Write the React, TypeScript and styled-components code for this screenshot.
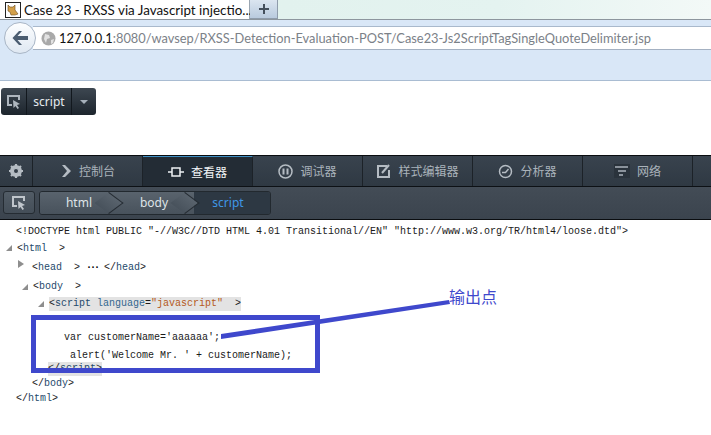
import styled, { createGlobalStyle } from "styled-components";

const GlobalStyle = createGlobalStyle`
  html, body { margin: 0; padding: 0; background: #fff; }
  body { font-family: "Noto Sans", "Noto Sans CJK SC", sans-serif; }
  * { box-sizing: border-box; }
  svg { flex: none; }
`;

const Page = styled.div`
  position: relative;
  width: 711px;
  height: 435px;
  overflow: hidden;
  background: #fff;
`;

/* browser chrome */
const TabStrip = styled.div`
  display: flex;
  height: 19px;
  background: linear-gradient(90deg, #f1f7ee 0%, #e2f2ee 40%, #e4f3f0 70%, #f3f9f7 100%);
`;

const Tab = styled.div`
  display: flex;
  align-items: center;
  gap: 3px;
  width: 250px;
  padding-left: 5px;
  background: #fff;
  border-right: 1px solid #9aa6b2;
  font-family: Lato, sans-serif;
  font-size: 13.4px;
  color: #111;
  white-space: nowrap;
`;

const NewTab = styled.div`
  display: flex;
  align-items: center;
  justify-content: center;
  width: 28px;
  background: linear-gradient(#dbe5f0, #b9cade);
  border-right: 1px solid #8f9cab;
  border-bottom: 1px solid #8f9cab;
`;

const Toolbar = styled.div`
  height: 62px;
  padding-top: 6px;
  background: #d9e7f7;
  border-top: 1px solid #8d969e;
  border-bottom: 1px solid #a9bcd2;
`;

const AddressRow = styled.div`
  display: flex;
  align-items: center;
  height: 24px;
`;

const BackButton = styled.div`
  display: flex;
  align-items: center;
  justify-content: center;
  flex: none;
  width: 32px;
  height: 32px;
  margin: 0 -3px 0 4px;
  border-radius: 50%;
  border: 1px solid #a9b6c6;
  background: linear-gradient(#fdfeff, #dfe8f2);
  position: relative;
  z-index: 1;
`;

const AddressBar = styled.div`
  display: flex;
  align-items: center;
  gap: 3px;
  flex: 1;
  height: 24px;
  padding-left: 8px;
  background: #fff;
  border-top: 1px solid #a9b9cc;
  border-bottom: 1px solid #a4b1c2;
  font-family: Lato, sans-serif;
  font-size: 12.83px;
  color: #7b8188;
  white-space: nowrap;
`;

const Host = styled.span`
  color: #111;
`;

const PageBody = styled.div`
  height: 74px;
  padding: 7px 1px;
`;

const PickerGroup = styled.div`
  display: flex;
  width: 95px;
  height: 27px;
  border-radius: 3px;
  overflow: hidden;
  background: linear-gradient(#3d4751, #1d252d);
  color: #e6ebef;
  font-size: 12px;
`;

const PickerCell = styled.div<{ $w: number }>`
  display: flex;
  align-items: center;
  justify-content: center;
  width: ${(p) => p.$w}px;
  border-right: 1px solid #12181e;
  &:last-child { border-right: 0; }
`;

const Caret = styled.div`
  width: 0;
  height: 0;
  border-left: 4px solid transparent;
  border-right: 4px solid transparent;
  border-top: 4px solid #a6b0ba;
`;

/* devtools */
const DevTabs = styled.div`
  display: flex;
  height: 32px;
  background: linear-gradient(#39434e, #2f3943);
  border-top: 1px solid #0a0d10;
  border-bottom: 1px solid #0d1115;
`;

const GearCell = styled.div`
  display: flex;
  align-items: center;
  justify-content: center;
  flex: none;
  width: 33px;
  border-right: 1px solid #1c2228;
`;

const DevTab = styled.div<{ $active?: boolean }>`
  display: flex;
  align-items: center;
  justify-content: center;
  gap: 7px;
  flex: none;
  width: 110px;
  font-size: 12px;
  color: ${(p) => (p.$active ? "#f2f5f7" : "#aab3bb")};
  border-right: 1px solid #1c2228;
  background: ${(p) => (p.$active ? "#232c35" : "transparent")};
  border-top: ${(p) => (p.$active ? "1px solid #3f8fc4" : "0")};
`;

const CrumbBar = styled.div`
  display: flex;
  align-items: center;
  gap: 4px;
  height: 33px;
  padding: 0 0 1px 3px;
  background: linear-gradient(#434c56, #3b444e);
  border-bottom: 1px solid #0a0d10;
`;

const CrumbPick = styled.div`
  display: flex;
  align-items: center;
  justify-content: center;
  width: 32px;
  height: 23px;
  border-radius: 3px;
  border: 1px solid #252c33;
  background: linear-gradient(#525c66, #444e58);
`;

const Crumbs = styled.div`
  display: flex;
  height: 24px;
  border: 1px solid #22292f;
  border-radius: 3px;
  overflow: hidden;
`;

const Crumb = styled.div<{ $w: number; $pad: number; $selected?: boolean }>`
  position: relative;
  display: flex;
  align-items: center;
  justify-content: center;
  width: ${(p) => p.$w}px;
  padding-right: ${(p) => p.$pad}px;
  font-size: 12px;
  color: ${(p) => (p.$selected ? "#3f97e6" : "#dfe4e8")};
  background: ${(p) => (p.$selected ? "#2d3843" : "linear-gradient(#59636d, #48525c)")};
  span { position: relative; z-index: 2; }
  &::after {
    content: ${(p) => (p.$selected ? "none" : '""')};
    position: absolute;
    right: 0;
    top: 2px;
    width: 17px;
    height: 17px;
    transform: rotate(45deg) skew(-8deg, -8deg);
    background: inherit;
    border-top: 1px solid #252c33;
    border-right: 1px solid #252c33;
    z-index: 1;
  }
`;

const Code = styled.div`
  padding-top: 3px;
  font-family: "Liberation Mono", "DejaVu Sans Mono", monospace;
  font-size: 10px;
  color: #1a1a1a;
`;

const Row = styled.div<{ $h: number; $indent: number; $end?: boolean }>`
  display: flex;
  align-items: ${(p) => (p.$end ? "flex-end" : "center")};
  height: ${(p) => p.$h}px;
  padding-left: ${(p) => p.$indent}px;
  white-space: pre;
`;

const Twisty = styled.span<{ $open?: boolean }>`
  width: 0;
  height: 0;
  margin-right: 5px;
  ${(p) =>
    p.$open
      ? `border-left: 6px solid transparent; border-bottom: 6px solid #8e8e8e;`
      : `border-top: 4px solid transparent; border-bottom: 4px solid transparent; border-left: 6px solid #8e8e8e; margin-top: -6px; margin-right: 8px;`}
`;

const Highlight = styled.span`
  display: inline-block;
  line-height: 14px;
  background: #e3e3e3;
`;

const Dots = styled.span`
  letter-spacing: -2px;
  font-weight: 700;
  color: #000;
`;

const Tag = styled.span`
  color: #24496b;
`;

const Attr = styled.span`
  color: #33678f;
`;

const Str = styled.span`
  color: #b4591c;
`;

/* hand-drawn annotation over the screenshot */
const MarkBox = styled.div`
  position: absolute;
  left: 31px;
  top: 315px;
  width: 289px;
  height: 58px;
  border: 5px solid #3f48cc;
`;

const MarkLine = styled.svg`
  position: absolute;
  left: 0;
  top: 0;
`;

const MarkLabel = styled.div`
  position: absolute;
  left: 449px;
  top: 287px;
  font-size: 16px;
  line-height: 20px;
  color: #3f48cc;
`;

const Cat = () => (
  <svg width="16" height="16" viewBox="0 0 16 16">
    <rect x="0.5" y="0.5" width="15" height="15" fill="#fff" stroke="#222" />
    <path d="M3 3l2 2h3l2-2v5l3 4-3 1H6l-1-3-2-1z" fill="#d3a04a" stroke="#6b4a1c" strokeWidth="0.6" />
  </svg>
);

const PickIcon = ({ color }: { color: string }) => (
  <svg width="16" height="15" viewBox="0 0 16 15" fill="none">
    <path d="M6 11H2V2h11v4" stroke={color} strokeWidth="2" />
    <path d="M7 6l7 4-3 1 2 3-1.500 1-2-3-2 2z" fill={color} />
  </svg>
);

const Gear = () => (
  <svg width="16" height="16" viewBox="0 0 16 16">
    <circle cx="8" cy="8" r="4.500" fill="none" stroke="#b5bcc3" strokeWidth="3" />
    <path d="M8 1v14M1 8h14M3 3l10 10M13 3L3 13" stroke="#b5bcc3" strokeWidth="2.200" />
    <circle cx="8" cy="8" r="2" fill="#333d47" />
  </svg>
);

export default function App() {
  return (
    <Page>
      <GlobalStyle />
      <TabStrip>
        <Tab>
          <Cat />
          Case 23 - RXSS via Javascript injectio...
        </Tab>
        <NewTab>
          <svg width="12" height="12" viewBox="0 0 12 12">
            <path d="M6 1v10M1 6h10" stroke="#444f5c" strokeWidth="2" />
          </svg>
        </NewTab>
      </TabStrip>
      <Toolbar>
        <AddressRow>
          <BackButton>
            <svg width="18" height="16" viewBox="0 0 18 16">
              <path d="M8 1L1.500 8 8 15h3L6.500 10H17V6H6.500L11 1z" fill="#4a5c70" />
            </svg>
          </BackButton>
          <AddressBar>
            <svg width="15" height="15" viewBox="0 0 15 15">
              <circle cx="7.500" cy="7.500" r="7" fill="#a9a9a9" />
              <path d="M4 3l4 1 1 3-3 1-1 4-2-4zM10 9l3-1-1 4-2 1z" fill="#e2e2e2" />
            </svg>
            <span>
              <Host>127.0.0.1</Host>:8080/wavsep/RXSS-Detection-Evaluation-POST/Case23-Js2ScriptTagSingleQuoteDelimiter.jsp
            </span>
          </AddressBar>
        </AddressRow>
      </Toolbar>

      <PageBody>
        <PickerGroup>
          <PickerCell $w={26}>
            <PickIcon color="#aeb6be" />
          </PickerCell>
          <PickerCell $w={45}>script</PickerCell>
          <PickerCell $w={24}>
            <Caret />
          </PickerCell>
        </PickerGroup>
      </PageBody>

      <DevTabs>
        <GearCell>
          <Gear />
        </GearCell>
        <DevTab>
          <svg width="12" height="14" viewBox="0 0 12 14">
            <path d="M2 1h3l6 6-6 6H2l5-6z" fill="#b5bcc3" />
          </svg>
          控制台
        </DevTab>
        <DevTab $active>
          <svg width="16" height="14" viewBox="0 0 16 14" fill="none" stroke="#eef1f3" strokeWidth="1.500">
            <rect x="4" y="3" width="8" height="8" />
            <path d="M0 7h4M12 7h4" />
          </svg>
          查看器
        </DevTab>
        <DevTab>
          <svg width="15" height="15" viewBox="0 0 15 15" fill="none" stroke="#b5bcc3">
            <circle cx="7.500" cy="7.500" r="6.500" strokeWidth="1.500" />
            <path d="M5.500 4.500v6M9.500 4.500v6" strokeWidth="2" />
          </svg>
          调试器
        </DevTab>
        <DevTab>
          <svg width="15" height="15" viewBox="0 0 15 15" fill="none" stroke="#b5bcc3" strokeWidth="2">
            <path d="M11 2H2v11h11V6" />
            <path d="M6 9l7-8" />
          </svg>
          样式编辑器
        </DevTab>
        <DevTab>
          <svg width="15" height="15" viewBox="0 0 15 15" fill="none" stroke="#b5bcc3">
            <circle cx="7.500" cy="7.500" r="6" strokeWidth="1.500" />
            <path d="M4 8.500h3.500L10.500 5" strokeWidth="1.500" />
          </svg>
          分析器
        </DevTab>
        <DevTab>
          <svg width="16" height="14" viewBox="0 0 16 14">
            <rect width="16" height="14" fill="#2a333c" />
            <path d="M1 3h13M4 7h8M5 11h4" stroke="#aab3bb" strokeWidth="1.500" />
          </svg>
          网络
        </DevTab>
      </DevTabs>

      <CrumbBar>
        <CrumbPick>
          <PickIcon color="#c0c6cc" />
        </CrumbPick>
        <Crumbs>
          <Crumb $w={78} $pad={0}><span>html</span></Crumb>
          <Crumb $w={76} $pad={4}><span>body</span></Crumb>
          <Crumb $w={76} $pad={8} $selected><span>script</span></Crumb>
        </Crumbs>
      </CrumbBar>

      <Code>
        <Row $h={17} $indent={16}>
          {'<!DOCTYPE html PUBLIC "-//W3C//DTD HTML 4.01 Transitional//EN" "http://www.w3.org/TR/html4/loose.dtd">'}
        </Row>
        <Row $h={16} $indent={6}>
          <Twisty $open />
          {"<"}<Tag>html</Tag>{"  >"}
        </Row>
        <Row $h={22} $indent={18}>
          <Twisty />
          {"<"}<Tag>head</Tag>{"  > "}<Dots>···</Dots>{" </"}<Tag>head</Tag>{">"}
        </Row>
        <Row $h={17} $indent={22}>
          <Twisty $open />
          {"<"}<Tag>body</Tag>{"  >"}
        </Row>
        <Row $h={18} $indent={38}>
          <Twisty $open />
          <Highlight>
            {"<"}<Tag>script</Tag> <Attr>language</Attr>=<Str>"javascript"</Str>{"  >"}
          </Highlight>
        </Row>
        <Row $h={30} $indent={64} $end>
          {"var customerName='aaaaaa';"}
        </Row>
        <Row $h={18} $indent={70} $end>
          {"alert('Welcome Mr. ' + customerName);"}
        </Row>
        <Row $h={15} $indent={48}>
          <Highlight>{"</"}<Tag>script</Tag>{">"}</Highlight>
        </Row>
        <Row $h={15} $indent={32}>
          {"</"}<Tag>body</Tag>{">"}
        </Row>
        <Row $h={15} $indent={16}>
          {"</"}<Tag>html</Tag>{">"}
        </Row>
      </Code>

      <MarkBox />
      <MarkLine width="711" height="435">
        <path d="M221 334 L449 300 L450 304 L221 339 Z" fill="#3f48cc" />
      </MarkLine>
      <MarkLabel>输出点</MarkLabel>
    </Page>
  );
}
